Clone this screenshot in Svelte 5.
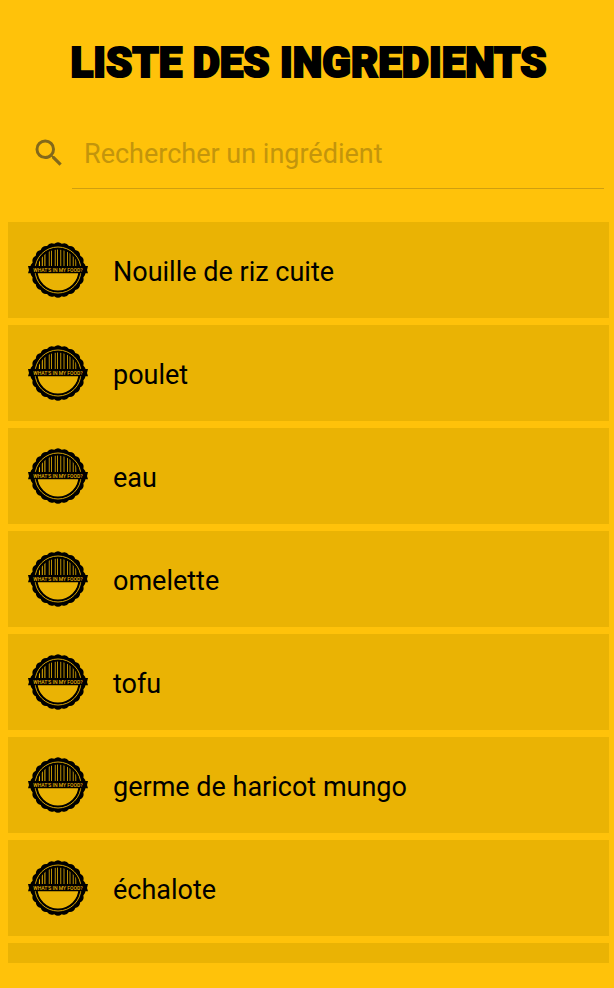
<script>
  let query = $state('');
  const ingredients = [
    'Nouille de riz cuite',
    'poulet',
    'eau',
    'omelette',
    'tofu',
    'germe de haricot mungo',
    'échalote',
    ''
  ];

  // [x, width] of each barcode stripe on the badge
  const bars = [
    [9, 1.8], [12, 1.8], [14.8, 1.6], [17.4, 3.4], [21.6, 1.4],
    [23.8, 3], [27.6, 1.6], [30, 2.4], [33.2, 2.4], [36.4, 2.8],
    [40, 1.6], [42.4, 2.4], [45.6, 1.8], [48.2, 2]
  ];

  // Scalloped outline of the badge
  const count = 22;
  const point = (r, a) => `${(30 + r * Math.cos(a)).toFixed(2)} ${(28 + r * Math.sin(a)).toFixed(2)}`;
  let edge = `M${point(26.4, 0)}`;
  for (let i = 0; i < count; i++) {
    const step = (2 * Math.PI) / count;
    edge += `Q${point(29.2, (i + 0.5) * step)} ${point(26.4, (i + 1) * step)}`;
  }
  edge += 'Z';
</script>

<main>
  <h1>LISTE DES INGREDIENTS</h1>

  <label class="search">
    <svg class="glass" viewBox="0 0 24 24" aria-hidden="true">
      <path d="M15.5 14h-.79l-.28-.27A6.47 6.47 0 0 0 16 9.5 6.5 6.5 0 1 0 9.5 16c1.61 0 3.09-.59 4.23-1.57l.27.28v.79l5 4.99L20.49 19l-4.99-5zm-6 0C7.01 14 5 11.99 5 9.5S7.01 5 9.5 5 14 7.01 14 9.5 11.99 14 9.5 14z" />
    </svg>
    <input type="text" placeholder="Rechercher un ingrédient" aria-label="Rechercher un ingrédient" bind:value={query} />
  </label>

  <ul>
    {#each ingredients as name}
      <li class:cut={!name}>
        {#if name}
          <svg class="badge" viewBox="0 0 60 56" aria-hidden="true">
            <path d={edge} />
            <circle class="ring" cx="30" cy="28" r="23" />
            <circle class="face" cx="30" cy="28" r="21.2" />
            <clipPath id="face-clip"><circle cx="30" cy="28" r="21.2" /></clipPath>
            <g clip-path="url(#face-clip)">
              {#each bars as [x, w]}
                <rect {x} y="6" width={w} height="18" />
              {/each}
            </g>
            <path d="M0 24H60L59 28L60 31.2H0L1 28Z" />
            <text x="30" y="29.6" text-anchor="middle">WHAT'S IN MY FOOD?</text>
          </svg>
          <span>{name}</span>
        {/if}
      </li>
    {/each}
  </ul>
</main>

<style>
  :global(body) {
    margin: 0;
    background: #ffc20a;
  }

  main {
    padding: 37px 5px 24px 8px;
    font-family: Roboto, 'Noto Sans', sans-serif;
    color: #000;
  }

  h1 {
    margin: 0;
    font: 900 42px/52px Roboto, sans-serif;
    text-align: center;
    white-space: nowrap;
    -webkit-text-stroke: 2px #000;
  }

  .search {
    display: flex;
    align-items: flex-start;
    margin: 31px 5px 33px 24px;
  }

  .glass {
    flex: none;
    width: 36px;
    height: 36px;
    margin: 15px 5px 0 -1px;
    fill: #83691b;
  }

  input {
    flex: 1;
    min-width: 0;
    height: 69px;
    box-sizing: border-box;
    padding: 0 12px;
    border: 0;
    border-bottom: 1px solid #cf9f10;
    outline: 0;
    background: transparent;
    font: 400 27px/32px Roboto, sans-serif;
    color: #000;
  }

  input::placeholder {
    color: #c3950c;
    opacity: 1;
  }

  ul {
    display: flex;
    flex-direction: column;
    gap: 7px;
    margin: 0;
    padding: 0;
    list-style: none;
  }

  li {
    display: flex;
    align-items: center;
    gap: 25px;
    height: 96px;
    padding: 0 20px;
    box-sizing: border-box;
    background: #eab304;
    font-size: 27px;
    line-height: 32px;
  }

  li span {
    padding-top: 3px;
  }

  .cut {
    height: 20px;
  }

  .badge {
    flex: none;
    width: 60px;
    height: 56px;
  }

  .ring {
    fill: none;
    stroke: #eab304;
    stroke-width: 0.9;
  }

  .face {
    fill: #eab304;
    stroke: #000;
    stroke-width: 1.4;
  }

  text {
    fill: #eab304;
    font: 500 5px Roboto, sans-serif;
  }
</style>
